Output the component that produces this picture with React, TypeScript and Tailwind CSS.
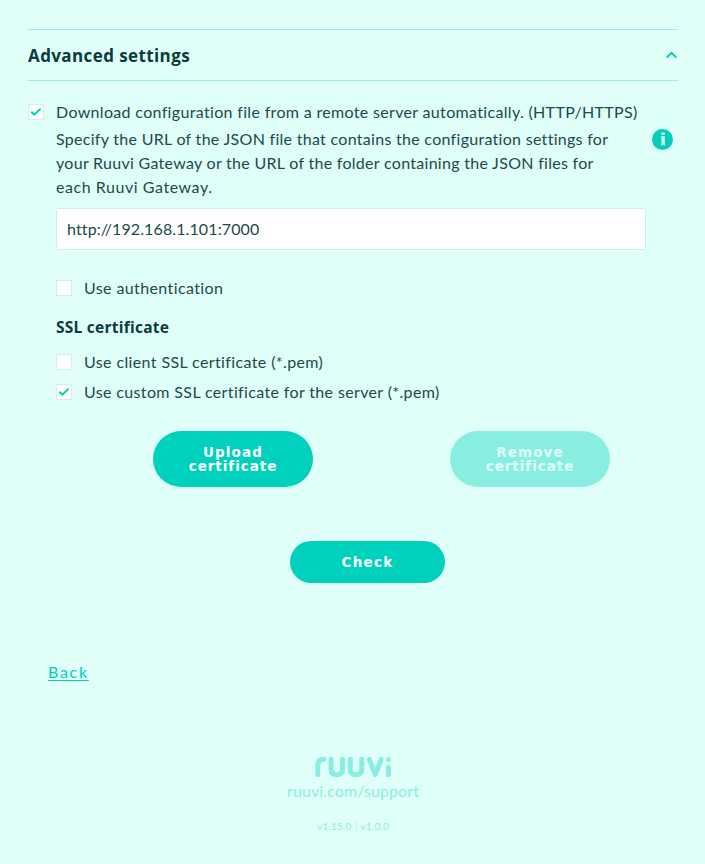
import type { ReactNode } from "react";

function Checkbox({ checked = false }: { checked?: boolean }) {
  return (
    <span
      role="checkbox"
      aria-checked={checked}
      className="flex size-4 shrink-0 items-center justify-center border border-[#d3efea] bg-white"
    >
      {checked && (
        <svg width="12" height="10" viewBox="0 0 12 10" fill="none" stroke="#00cdb9" strokeWidth="2">
          <path d="M1.2 4.7 4.4 7.6 10.6 1.6" />
        </svg>
      )}
    </span>
  );
}

function CheckRow({ checked, children }: { checked?: boolean; children: ReactNode }) {
  return (
    <label className="flex h-6 items-center gap-3">
      <Checkbox checked={checked} />
      <span className="whitespace-nowrap">{children}</span>
    </label>
  );
}

export default function App() {
  return (
    <main className="h-[864px] w-[705px] overflow-hidden bg-[#e1fff9] pr-[27px] pl-7 pt-[29px] font-['Lato',sans-serif] text-base leading-6 text-[#1a4a4a]">
      <header className="flex h-[52px] items-center justify-between border-y border-[#9eeae0]">
        <h2 className="pt-px font-['Open_Sans',sans-serif] text-[17px] font-bold text-[#083c3d]">
          <span className="tracking-[0.4px]">Advanced settings</span>
        </h2>
        <svg width="13" height="8" viewBox="0 0 13 8" fill="none" stroke="#00cdb9" strokeWidth="2">
          <path d="M1.7 6.5 6.5 1.9 11.3 6.5" />
        </svg>
      </header>

      <section className="pt-[19px]">
        <CheckRow checked>
          <span className="tracking-[0.33px]">
            Download configuration file from a remote server automatically. (HTTP/HTTPS)
          </span>
        </CheckRow>

        <div className="mt-[3px] flex justify-between pl-7">
          <p className="whitespace-nowrap">
            <span className="tracking-[0.29px]">Specify the URL of the JSON file that contains the configuration settings for</span>
            <br />
            <span className="tracking-[0.29px]">your Ruuvi Gateway or the URL of the folder containing the JSON files for</span>
            <br />
            <span className="tracking-[0.55px]">each Ruuvi Gateway.</span>
          </p>
          <svg className="mt-0.5 mr-[5px]" width="21" height="21" viewBox="0 0 21 21">
            <circle cx="10.5" cy="10.5" r="10.5" fill="#00cfbb" />
            <path d="M9.4 3.4h3.4v2.4H9.4zM8.9 7.3h3.9v8h.4v.9H8.9v-.9h.5V8.2h-.5z" fill="#d8faf4" />
          </svg>
        </div>

        <div className="mt-[9px] ml-7 flex h-[42px] w-[590px] items-center rounded-[3px] border border-[#cfeee8] bg-white px-2.5">
          <span className="tracking-[0.12px]">http://192.168.1.101:7000</span>
        </div>

        <div className="mt-[26px] pl-7">
          <CheckRow>
            <span className="tracking-[0.39px]">Use authentication</span>
          </CheckRow>
          <h3 className="mt-[15px] mb-[11px] font-['Open_Sans',sans-serif] text-[15.5px] font-bold text-[#083c3d]">
            <span className="tracking-[0.25px]">SSL certificate</span>
          </h3>
          <CheckRow>
            <span className="tracking-[0.38px]">Use client SSL certificate (*.pem)</span>
          </CheckRow>
          <div className="mt-1.5">
            <CheckRow checked>
              <span className="tracking-[0.36px]">Use custom SSL certificate for the server (*.pem)</span>
            </CheckRow>
          </div>
        </div>

        <div className="mt-[27px] flex gap-[137px] pl-[125px] font-['DejaVu_Sans',sans-serif] text-[13.5px] leading-[14px] font-bold text-white">
          <button className="h-14 w-40 rounded-full bg-[#00d1bd]">
            <span className="block tracking-[1.1px]">Upload</span>
            <span className="block tracking-[0.95px]">certificate</span>
          </button>
          <button disabled className="h-14 w-40 rounded-full bg-[#88eee1] text-[#e1fff9]">
            <span className="block tracking-[1.1px]">Remove</span>
            <span className="block tracking-[0.95px]">certificate</span>
          </button>
        </div>

        <button className="mt-[54px] ml-[262px] block h-[42px] w-[155px] rounded-full bg-[#00d1bd] font-['DejaVu_Sans',sans-serif] text-[13.5px] font-bold text-white">
          <span className="tracking-[1.3px]">Check</span>
        </button>
      </section>

      <div className="mt-[77px] pl-5">
        <a className="text-[#00cdb9] underline underline-offset-2">
          <span className="tracking-[1.7px]">Back</span>
        </a>
      </div>

      <footer className="mt-[72px] flex flex-col items-center text-[#88eee1]">
        <svg
          width="77"
          height="22"
          viewBox="0 0 77 22"
          fill="none"
          stroke="#88eee1"
          strokeWidth="5"
          strokeLinecap="round"
          strokeLinejoin="round"
        >
          <path d="M2.8 18.7V10Q2.8 3.3 8.8 3.3" />
          <path d="M16 3.3V13Q16 18.7 21.8 18.7Q27.5 18.7 27.5 13V3.3" />
          <path d="M35.3 3.3V13Q35.3 18.7 41 18.7Q46.8 18.7 46.8 13V3.3" />
          <path d="M54.3 3.3 60.3 18.5 66.2 3.3" />
          <path d="M73.5 11.5V18.7M73.5 3.4V3.5" />
        </svg>
        <a className="mt-px">
          <span className="tracking-[0.1px]">ruuvi.com/support</span>
        </a>
        <div className="mt-[17px] flex h-3 items-center text-[10px] leading-3">
          <span className="tracking-[0.2px]">v1.15.0</span>
          <span className="mx-1 h-2.5 w-px bg-[#b8f4eb]" />
          <span className="tracking-[0.2px]">v1.0.0</span>
        </div>
      </footer>
    </main>
  );
}
